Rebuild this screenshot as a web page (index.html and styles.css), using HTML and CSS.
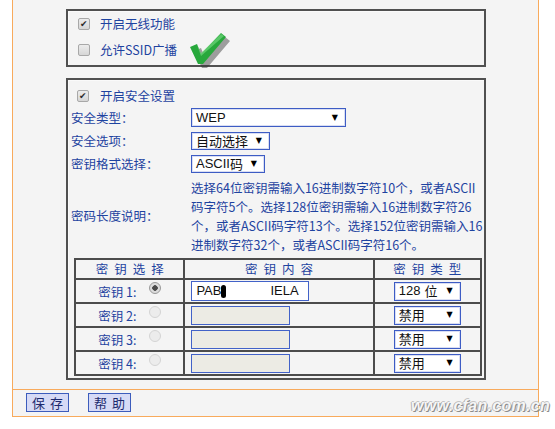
FILE: index.html
```html
<!DOCTYPE html>
<html lang="zh-CN">
<head>
    <meta charset="UTF-8">
    <title>无线安全设置</title>
    <link rel="stylesheet" href="styles.css">
</head>
<body>
    <div class="frame">
        <div class="main">
            <!-- 无线功能开关 -->
            <div class="box box-wireless">
                <div class="check-row"><span class="cb on"></span><span>开启无线功能</span></div>
                <div class="check-row"><span class="cb"></span><span>允许SSID广播</span></div>
                <svg class="tick" width="44" height="38" viewBox="0 0 44 38">
                    <polygon points="4,18 11,15 15,25 35,4 40,8 17,35 12,35" fill="#333" opacity="0.45" transform="translate(2,2)"/>
                    <polygon points="2,16 9,13 13,23 33,2 38,6 15,33 10,33" fill="#27a83c"/>
                    <polygon points="9,14 13,22 33,3 36,5 13,25" fill="#6fd47a" opacity="0.7"/>
                </svg>
            </div>

            <!-- 安全设置 -->
            <div class="box box-security">
                <div class="check-row check-row-sec"><span class="cb on"></span><span>开启安全设置</span></div>
                <div class="form">
                    <div class="label">安全类型：</div>
                    <div class="field"><span class="sel sel-type"><span class="latin">WEP</span><i>▼</i></span></div>
                    <div class="label">安全选项：</div>
                    <div class="field"><span class="sel sel-option">自动选择<i>▼</i></span></div>
                    <div class="label">密钥格式选择：</div>
                    <div class="field"><span class="sel sel-format"><span class="latin">ASCII</span>码<i>▼</i></span></div>
                    <div class="label label-desc">密码长度说明：</div>
                    <div class="desc">选择64位密钥需输入16进制数字符10个，或者ASCII<br>码字符5个。选择128位密钥需输入16进制数字符26<br>个，或者ASCII码字符13个。选择152位密钥需输入16<br>进制数字符32个，或者ASCII码字符16个。</div>
                </div>

                <table class="keys">
                    <colgroup>
                        <col class="col-pick">
                        <col class="col-value">
                        <col class="col-kind">
                    </colgroup>
                    <tr class="head">
                        <td>密钥选择</td>
                        <td>密钥内容</td>
                        <td>密钥类型</td>
                    </tr>
                    <tr>
                        <td class="pick">密钥 1: <span class="radio on"></span></td>
                        <td class="value"><span class="key-input key-active">PAB<b class="blot"></b><span class="gap"></span>IELA</span></td>
                        <td class="kind"><span class="sel sel-kind"><span class="latin num">128</span>位<i>▼</i></span></td>
                    </tr>
                    <tr>
                        <td class="pick">密钥 2: <span class="radio"></span></td>
                        <td class="value"><span class="key-input"></span></td>
                        <td class="kind"><span class="sel sel-kind">禁用<i>▼</i></span></td>
                    </tr>
                    <tr>
                        <td class="pick">密钥 3: <span class="radio"></span></td>
                        <td class="value"><span class="key-input"></span></td>
                        <td class="kind"><span class="sel sel-kind">禁用<i>▼</i></span></td>
                    </tr>
                    <tr>
                        <td class="pick">密钥 4: <span class="radio"></span></td>
                        <td class="value"><span class="key-input"></span></td>
                        <td class="kind"><span class="sel sel-kind">禁用<i>▼</i></span></td>
                    </tr>
                </table>
            </div>
        </div>

        <div class="footer">
            <button class="btn">保存</button>
            <button class="btn">帮助</button>
        </div>
    </div>

    <div class="watermark">www.cfan.com.cn</div>
</body>
</html>
```

FILE: styles.css
```css
/* Reset margin for body */
body {
    margin: 0;
    height: 429px;
    overflow: hidden;
    position: relative;
    background: #fff;
    font-family: "Noto Sans CJK SC", "Liberation Sans", sans-serif;
    font-size: 12.5px;
    line-height: 18px;
    color: #1e43a0; /* blue label text */
}

/* Orange outlined page frame */
.frame {
    margin-left: 12px;
    width: 525px;
    background: #f4f4f4;
    border-left: 1px solid #f8aa5c;
    border-right: 1px solid #f8aa5c;
    border-bottom: 1px solid #f8aa5c;
}

.main {
    padding: 9px 0 9px 53px;
}

.box {
    position: relative;
    width: 420px;
    box-sizing: border-box;
    border: 2px solid #505050;
    box-shadow: inset 1px 1px 0 #fafafa;
}

.box-wireless {
    height: 58px;
    padding: 4px 0 0 10px;
}

.box-security {
    height: 302px;
    margin-top: 11px;
    padding: 6px 0 0 3px;
}

.check-row {
    display: flex;
    align-items: center;
    gap: 10px;
    height: 18px;
}

.check-row + .check-row {
    margin-top: 8px;
}

.check-row-sec {
    height: 20px;
    padding-left: 6px;
    gap: 11px;
}

/* Grey system checkbox */
.cb {
    width: 10px;
    height: 10px;
    border: 1px solid #a8a8a8;
    border-radius: 2px;
    background: linear-gradient(#ececec, #d6d6d6);
    position: relative;
}

.cb.on::after {
    content: "✔";
    position: absolute;
    left: 1px;
    top: -4px;
    font-family: "DejaVu Sans", sans-serif;
    font-size: 9px;
    color: #2a2a2a;
}

.tick {
    position: absolute;
    left: 120px;
    top: 20px;
}

.form {
    display: grid;
    grid-template-columns: 120px 1fr;
    grid-template-rows: 23px 23px 23px 79px;
}

.label,
.field {
    display: flex;
    align-items: center;
}

.label-desc,
.desc {
    padding-top: 3px;
}

.desc {
    line-height: 19px;
    white-space: nowrap;
}

/* Drop-down look */
.sel {
    display: flex;
    align-items: center;
    box-sizing: border-box;
    height: 19px;
    padding: 0 7px 0 4px;
    background: #fff;
    border: 1px solid #3d5cc4;
    box-shadow: inset 0 0 0 1px #d9def3;
    color: #111;
    font-size: 13px;
    white-space: nowrap;
}

.sel i {
    margin-left: auto;
    font-style: normal;
    font-family: "DejaVu Sans", sans-serif;
    font-size: 8px;
    color: #000;
}

.latin {
    font-family: "Liberation Sans", sans-serif;
}

.num {
    margin-right: 4px;
}

.sel-type { width: 155px; }
.sel-option { width: 79px; height: 18px; }
.sel-format { width: 74px; height: 18px; }
.sel-kind { width: 67px; }

/* Keys table */
.keys {
    margin: 4px 0 0 3px;
    width: 408px;
    border-collapse: collapse;
    border: 2px solid #4c4c4c;
}

.keys td {
    border: 2px solid #4c4c4c;
    padding: 0;
    height: 22px;
}

.col-pick { width: 110px; }
.col-value { width: 190px; }
.col-kind { width: 108px; }

.keys .head td {
    height: 18px;
    text-align: center;
    letter-spacing: 6px;
    text-indent: 6px;
}

.pick {
    text-align: center;
    white-space: nowrap;
}

.radio {
    display: inline-block;
    width: 10px;
    height: 10px;
    margin-left: 10px;
    vertical-align: 3px;
    border: 1px solid #d4d4d4;
    border-radius: 50%;
    background: #ececec;
}

.radio.on {
    border-color: #9a9a9a;
    background: radial-gradient(circle, #4a4a4a 0 2.5px, #dcdcdc 3px);
}

.value {
    padding-left: 6px !important;
}

.key-input {
    display: block;
    box-sizing: border-box;
    width: 99px;
    height: 19px;
    border: 1px solid #4262c8;
    background: #ecebe4;
}

.key-active {
    display: flex;
    align-items: center;
    width: 118px;
    height: 20px;
    padding-left: 4px;
    background: #fff;
    color: #111;
    font-family: "Liberation Sans", sans-serif;
    font-size: 13px;
}

.blot {
    width: 5px;
    height: 13px;
    border-radius: 3px;
    background: #000;
}

.gap {
    width: 44px;
}

.kind .sel {
    margin: 0 auto;
}

/* Bottom button bar */
.footer {
    height: 23px;
    padding: 3px 0 0 13px;
    border-top: 1px solid #f8aa5c;
    display: flex;
    gap: 19px;
    align-items: flex-start;
}

.btn {
    width: 43px;
    height: 19px;
    padding: 0;
    border: 1px solid #3c5cbc;
    background: #d6daf6;
    color: #1d2a6e;
    font-family: "Noto Sans CJK SC", sans-serif;
    font-size: 13px;
    line-height: 16px;
    letter-spacing: 5px;
    text-indent: 5px;
}

.watermark {
    position: absolute;
    left: 411px;
    top: 397px;
    font-family: "Liberation Sans", sans-serif;
    font-style: italic;
    font-weight: bold;
    font-size: 16px;
    letter-spacing: 0.3px;
    color: #f6f6f6;
    text-shadow: 1px 1px 0 #8c8c8c, -1px 0 0 #b4b4b4, 0 -1px 0 #c4c4c4;
}
```
